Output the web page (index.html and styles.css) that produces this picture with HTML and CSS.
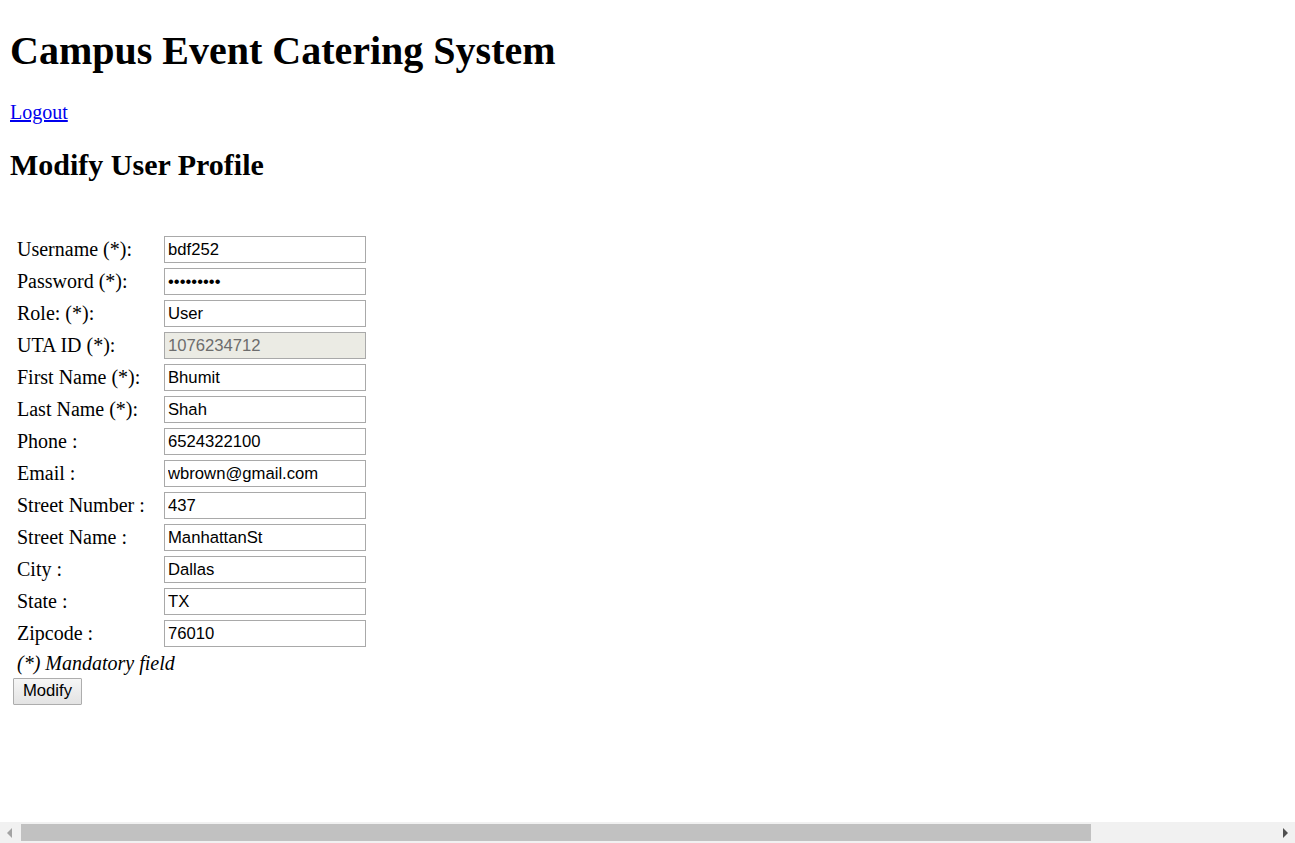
FILE: index.html
```html
<!DOCTYPE html>
<html>
<head>
<meta charset="utf-8">
<title>Campus Event Catering System</title>
<link rel="stylesheet" href="styles.css">
</head>
<body>
<h1 class="site-title">Campus Event Catering System</h1>
<div class="nav-line"><a class="logout" href="#">Logout</a></div>
<h2 class="page-title">Modify User Profile</h2>
<form class="profile-form">
  <div class="fields">
    <label class="field-label">Username (*):</label><input class="field-input" type="text" value="bdf252">
    <label class="field-label">Password (*):</label><input class="field-input" type="password" value="abcdefghi">
    <label class="field-label">Role: (*):</label><input class="field-input" type="text" value="User">
    <label class="field-label">UTA ID (*):</label><input class="field-input" type="text" value="1076234712" disabled>
    <label class="field-label">First Name (*):</label><input class="field-input" type="text" value="Bhumit">
    <label class="field-label">Last Name (*):</label><input class="field-input" type="text" value="Shah">
    <label class="field-label">Phone :</label><input class="field-input" type="text" value="6524322100">
    <label class="field-label">Email :</label><input class="field-input" type="text" value="wbrown@gmail.com">
    <label class="field-label">Street Number :</label><input class="field-input" type="text" value="437">
    <label class="field-label">Street Name :</label><input class="field-input" type="text" value="ManhattanSt">
    <label class="field-label">City :</label><input class="field-input" type="text" value="Dallas">
    <label class="field-label">State :</label><input class="field-input" type="text" value="TX">
    <label class="field-label">Zipcode :</label><input class="field-input" type="text" value="76010">
  </div>
  <div class="mandatory">(*) Mandatory field</div>
  <button class="submit-btn" type="button">Modify</button>
</form>
<div class="hscroll">
  <span class="arrow arrow-left"></span>
  <div class="track"><div class="thumb"></div></div>
  <span class="arrow arrow-right"></span>
</div>
</body>
</html>
```

FILE: styles.css
```css
html {
  overflow: hidden;
}
body {
  margin: 0 10px;
  font-family: "Liberation Serif", "Times New Roman", serif;
  font-size: 20px;
  color: #000;
  background: #fff;
}
.site-title {
  font-size: 40px;
  font-weight: bold;
  margin: 26.8px 0;
}
.nav-line {
  margin: 0;
  line-height: 23px;
}
.logout {
  color: #0000ee;
  text-decoration: underline;
}
.page-title {
  font-size: 30px;
  font-weight: bold;
  margin: 24.9px 0 0;
}
.profile-form {
  margin: 51.5px 0 0;
}
.fields {
  display: grid;
  grid-template-columns: 154px 202px;
  grid-auto-rows: 32px;
  align-items: center;
}
.field-label {
  padding-left: 7px;
  line-height: 23px;
}
.field-input {
  box-sizing: border-box;
  width: 202px;
  height: 27px;
  margin: 0;
  padding: 1px 3px;
  border: 1px solid #a9a9a9;
  font-family: "Liberation Sans", Arial, sans-serif;
  font-size: 16.67px;
  color: #000;
  background: #fff;
  outline: none;
}
.field-input:disabled {
  background: #ebebe4;
  color: #6d6d6d;
  border-color: #a9a9a9;
}
.mandatory {
  font-style: italic;
  padding-left: 7px;
  line-height: 23px;
  margin-top: 2px;
}
.submit-btn {
  display: block;
  box-sizing: border-box;
  margin: 3px 0 0 3px;
  width: 69px;
  height: 27px;
  padding: 0;
  font-family: "Liberation Sans", Arial, sans-serif;
  font-size: 16.67px;
  color: #000;
  border: 1px solid #adadad;
  border-radius: 1px;
  background: linear-gradient(#f6f6f6, #e3e3e3);
}
.hscroll {
  position: fixed;
  left: 0;
  right: 0;
  bottom: 0;
  height: 21px;
  background: #f1f1f1;
  display: flex;
  align-items: center;
}
.arrow {
  width: 20px;
  height: 21px;
  position: relative;
  flex: none;
}
.arrow::after {
  content: "";
  position: absolute;
  top: 6px;
  width: 0;
  height: 0;
  border-top: 5px solid transparent;
  border-bottom: 5px solid transparent;
}
.arrow-left::after {
  left: 7px;
  border-right: 5px solid #a3a3a3;
}
.arrow-right::after {
  right: 7px;
  border-left: 5px solid #505050;
}
.track {
  flex: 1;
  height: 21px;
  display: flex;
  align-items: center;
}
.thumb {
  margin-left: 1px;
  width: 1070px;
  height: 17px;
  background: #c1c1c1;
}
```
